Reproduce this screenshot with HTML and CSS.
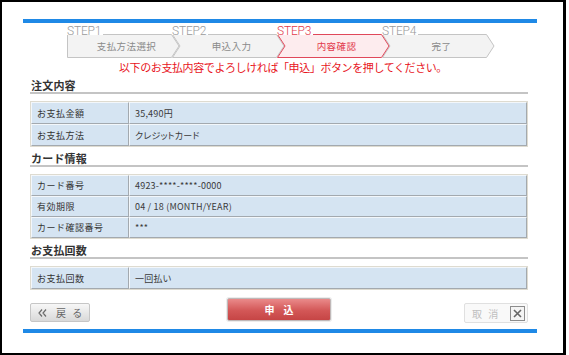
FILE: index.html
```html
<!DOCTYPE html>
<html lang="ja">
<head>
<meta charset="utf-8">
<title>お支払内容確認</title>
<link rel="stylesheet" href="styles.css">
</head>
<body>
<div class="frame">
  <div class="wrap">
    <div class="bar"></div>
    <ol class="steps">
      <li class="step step-first"><span class="step-no">STEP1</span><span class="step-name">支払方法選択</span></li>
      <li class="step"><span class="step-no">STEP2</span><span class="step-name">申込入力</span></li>
      <li class="step step-current"><span class="step-no">STEP3</span><span class="step-name">内容確認</span></li>
      <li class="step"><span class="step-no">STEP4</span><span class="step-name">完了</span></li>
    </ol>
    <p class="notice">以下のお支払内容でよろしければ「申込」ボタンを押してください。</p>
    <div class="content">
      <h2 class="sec-title">注文内容</h2>
      <table class="info">
        <tr><th>お支払金額</th><td>35,490円</td></tr>
        <tr><th>お支払方法</th><td>クレジットカード</td></tr>
      </table>
      <h2 class="sec-title">カード情報</h2>
      <table class="info info-tight">
        <tr><th>カード番号</th><td>4923-****-****-0000</td></tr>
        <tr><th>有効期限</th><td>04 / 18 (MONTH/YEAR)</td></tr>
        <tr><th>カード確認番号</th><td>***</td></tr>
      </table>
      <h2 class="sec-title">お支払回数</h2>
      <table class="info">
        <tr><th>お支払回数</th><td>一回払い</td></tr>
      </table>
      <div class="actions">
        <button class="btn btn-back" type="button"><svg class="chev" width="9" height="8" viewBox="0 0 9 8"><path d="M4 0.5 L1 4 L4 7.5 M8 0.5 L5 4 L8 7.5" fill="none" stroke="#6a6a6a" stroke-width="1.2"/></svg><span class="btn-label">戻 る</span></button>
        <button class="btn btn-submit" type="button">申込</button>
        <button class="btn btn-cancel" type="button"><span class="btn-label">取 消</span><svg class="xbox" width="15" height="15" viewBox="0 0 15 15"><rect x="0.5" y="0.5" width="14" height="14" fill="#f4f4f4" stroke="#8c8c8c"/><path d="M4 4 L11 11 M11 4 L4 11" stroke="#666" stroke-width="1.6"/></svg></button>
      </div>
    </div>
    <div class="bar bar-bottom"></div>
  </div>
</div>
</body>
</html>
```
FILE: styles.css
```css
* { box-sizing: border-box; }

html, body {
  margin: 0;
  padding: 0;
  background: #fff;
}

body {
  font-family: "Noto Sans CJK JP", "Noto Sans", sans-serif;
  color: #333;
}

.frame {
  width: 566px;
  height: 355px;
  border: 2px solid #000;
  border-right-width: 3px;
  background: #fff;
  overflow: hidden;
}

.wrap {
  width: 514px;
  margin: 17px 0 0 21px;
}

.bar {
  height: 4px;
  background: #1f89e6;
}

.bar-bottom {
  margin-top: 6px;
}

/* ---------- steps ---------- */
.steps {
  display: flex;
  list-style: none;
  margin: 4px 0 0 44px;
  padding: 0;
  height: 31px;
}

.step {
  width: 113px;
  height: 31px;
  margin-right: -8px;
  display: flex;
  flex-direction: column;
  background: url("data:image/svg+xml,%3Csvg xmlns='http://www.w3.org/2000/svg' width='113' height='31'%3E%3Cpolygon points='0.5,7.5 104.5,7.5 112,19 104.5,30.5 0.5,30.5 8,19' fill='%23f3f3f3' stroke='%23c4c4c4'/%3E%3C/svg%3E") no-repeat 0 0;
}

.step-first {
  background-image: url("data:image/svg+xml,%3Csvg xmlns='http://www.w3.org/2000/svg' width='113' height='31'%3E%3Cpolygon points='0.5,7.5 104.5,7.5 112,19 104.5,30.5 0.5,30.5' fill='%23f3f3f3' stroke='%23c4c4c4'/%3E%3C/svg%3E");
}

.step-current {
  position: relative;
  z-index: 1;
  background-image: url("data:image/svg+xml,%3Csvg xmlns='http://www.w3.org/2000/svg' width='113' height='31'%3E%3Cpolygon points='0.5,7.5 104.5,7.5 112,19 104.5,30.5 0.5,30.5 8,19' fill='%23fdecee' stroke='%23e0485a'/%3E%3C/svg%3E");
}

.step-no {
  align-self: flex-start;
  margin-top: 1px;
  height: 7px;
  padding-right: 2px;
  background: #fff;
  font-family: Roboto, "Liberation Sans", sans-serif;
  font-weight: 300;
  font-size: 12px;
  line-height: 7px;
  color: #9a9a9a;
  letter-spacing: -0.2px;
}

.step-name {
  flex: 1;
  display: flex;
  align-items: center;
  justify-content: center;
  padding: 0 2px 2px 8px;
  font-size: 9.5px;
  color: #8a8a8a;
  letter-spacing: 0.4px;
}

.step-current .step-no,
.step-current .step-name {
  color: #e2384a;
}

/* ---------- notice ---------- */
.notice {
  margin: 3px 0 0;
  text-align: center;
  font-size: 11px;
  line-height: 13px;
  color: #e8141c;
  letter-spacing: -0.4px;
  padding-left: 6px;
}

/* ---------- content ---------- */
.content {
  margin: 0 9px 0 7px;
}

.sec-title {
  margin: 4px 0 7px;
  padding-left: 1px;
  font-size: 11px;
  line-height: 14px;
  font-weight: 700;
  color: #333;
  border-bottom: 2px solid #c4c4c4;
  letter-spacing: 0.2px;
}

.info {
  width: 100%;
  border-collapse: separate;
  border-spacing: 0;
  border: 1px solid #dedbd0;
}

.info tr {
  height: 22px;
}

.info-tight tr {
  height: 21px;
}

.info th,
.info td {
  padding: 0 0 0 5px;
  background: #d5e4f2;
  border: 1px solid;
  border-color: #f3f7fb #a3a9af #a3a9af #f3f7fb;
  text-align: left;
  font-weight: 400;
  font-size: 9px;
  color: #333;
  vertical-align: middle;
}

.info th {
  width: 98px;
  letter-spacing: 0.5px;
}

.info td {
  font-feature-settings: "palt";
  letter-spacing: 0.2px;
  color: #3a3a3a;
}

/* ---------- actions ---------- */
.actions {
  display: grid;
  grid-template-columns: 1fr auto 1fr;
  align-items: start;
  margin-top: 8px;
  height: 25px;
}

.btn {
  font-family: "Noto Sans CJK JP", sans-serif;
  margin: 0;
  padding: 0;
  cursor: pointer;
}

.btn-back {
  justify-self: start;
  margin-top: 5px;
  width: 60px;
  height: 19px;
  display: flex;
  align-items: center;
  padding-left: 7px;
  gap: 9px;
  border: 1px solid #c6c6c6;
  border-radius: 2px;
  background: linear-gradient(#f7f7f7, #d9d9d9);
  color: #666;
  font-size: 10px;
  letter-spacing: 2px;
}

.chev {
  display: block;
}

.btn-submit {
  width: 104px;
  height: 23px;
  border: 1px solid #c0b8b8;
  border-radius: 2px;
  background: linear-gradient(#ea8a8a, #d35757 55%, #c64545);
  box-shadow: 0 0 0 1px #ececec;
  color: #fff;
  font-size: 10px;
  font-weight: 700;
  letter-spacing: 9px;
  padding-left: 9px;
}

.btn-cancel {
  justify-self: end;
  margin-top: 5px;
  width: 64px;
  height: 20px;
  display: flex;
  align-items: center;
  justify-content: space-between;
  padding: 0 2px 0 7px;
  border: 1px solid #e0e0e0;
  border-radius: 2px;
  background: #f9f9f9;
  color: #c0c0c0;
  font-size: 10px;
  letter-spacing: 2px;
}

.xbox {
  display: block;
}
```
